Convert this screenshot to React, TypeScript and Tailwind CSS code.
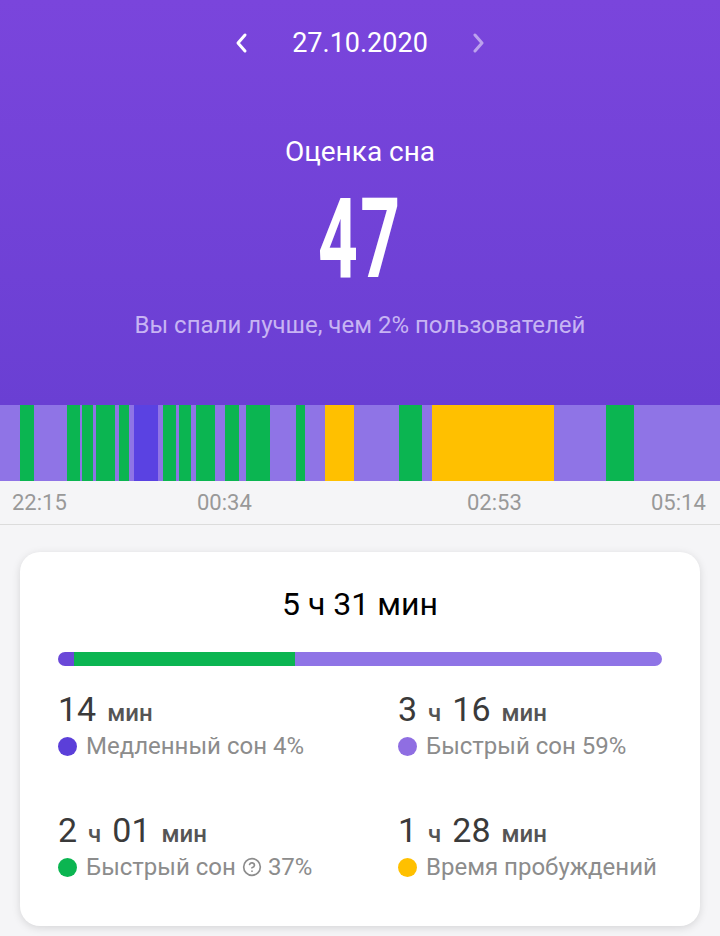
import React from "react";
import { CircleHelp } from "lucide-react";

const segs: [number, number, string][] = [
  [20, 34, "#0bb551"],
  [67, 80, "#0bb551"],
  [82, 93, "#0bb551"],
  [96, 115, "#0bb551"],
  [119, 129, "#0bb551"],
  [134, 158, "#5a42e2"],
  [163, 176, "#0bb551"],
  [179, 191, "#0bb551"],
  [196, 215, "#0bb551"],
  [225, 239, "#0bb551"],
  [246, 270, "#0bb551"],
  [296, 305, "#0bb551"],
  [325, 354, "#ffc000"],
  [399, 422, "#0bb551"],
  [432, 554, "#ffc000"],
  [606, 634, "#0bb551"],
];

function Stat({
  parts,
  dot,
  label,
}: {
  parts: [string, boolean][];
  dot: string;
  label: React.ReactNode;
}) {
  return (
    <div className="flex flex-col">
      <div className="h-[40px] leading-[40px] whitespace-nowrap">
        {parts.map(([t, big], i) =>
          big ? (
            <span key={i} className="text-[34px] text-[#3a3a3a]">
              {t}
            </span>
          ) : (
            <span key={i} className="text-[24px] text-[#555] font-medium mx-[11px]">
              {t}
            </span>
          )
        )}
      </div>
      <div className="mt-[3px] flex items-center h-[28px] text-[24px] leading-[28px] text-[#8c8c8c] whitespace-nowrap">
        <span className="w-[19px] h-[19px] rounded-full mr-[9px] shrink-0" style={{ background: dot }} />
        {label}
      </div>
    </div>
  );
}

export default function App() {
  return (
    <div className="w-[720px] h-[936px] overflow-hidden bg-[#f5f5f7] font-['Roboto',sans-serif]">
      <div className="h-[405px] bg-gradient-to-b from-[#7a45dc] to-[#6a3fd3] flex flex-col items-center">
        <div className="pt-[27px] flex items-center text-white">
          <svg width="14" height="22" viewBox="0 0 14 22" className="mr-[44px]">
            <polyline points="11,3 4,11 11,19" fill="none" stroke="white" strokeWidth="3" strokeLinecap="round" strokeLinejoin="round" />
          </svg>
          <span className="text-[27px] leading-[32px] text-white">27.10.2020</span>
          <svg width="14" height="22" viewBox="0 0 14 22" className="ml-[44px] opacity-50">
            <polyline points="3,3 10,11 3,19" fill="none" stroke="white" strokeWidth="3" strokeLinecap="round" strokeLinejoin="round" />
          </svg>
        </div>
        <div className="mt-[79px] text-[28px] leading-[28px] text-white">Оценка сна</div>
        <div className="mt-[17px] h-[112px] text-[112px] leading-[112px] font-bold text-white scale-x-[0.62] tracking-[4px]">47</div>
        <div className="mt-[17px] text-[24px] leading-[26px] text-[#c7b4f3]">
          Вы спали лучше, чем 2% пользователей
        </div>
      </div>
      <svg width="720" height="76" className="block">
        <rect x="0" y="0" width="720" height="76" fill="#8f74e6" />
        {segs.map(([a, b, c], i) => (
          <rect key={i} x={a} y={0} width={b - a} height={76} fill={c} />
        ))}
      </svg>
      <div className="relative h-[44px] border-b border-[#dcdcdc] text-[22px] leading-[44px] text-[#999]">
        <span className="absolute left-[12px] top-0">22:15</span>
        <span className="absolute left-[197px] top-0">00:34</span>
        <span className="absolute left-[467px] top-0">02:53</span>
        <span className="absolute left-[651px] top-0">05:14</span>
      </div>
      <div className="mt-[27px] mx-[20px] h-[374px] bg-white rounded-[20px] shadow-[0_2px_8px_rgba(0,0,0,0.13)] px-[38px] pt-[33px]">
        <div className="text-center text-[32px] leading-[38px] text-black">5 ч 31 мин</div>
        <div className="mt-[29px] h-[14px] rounded-full overflow-hidden flex">
          <div className="w-[16px] bg-[#6a48d8]" />
          <div className="w-[221px] bg-[#0bb551]" />
          <div className="flex-1 bg-[#8f74e6]" />
        </div>
        <div className="mt-[23px] grid grid-cols-[340px_1fr] gap-y-[50px]">
          <Stat parts={[["14", true], ["мин", false]]} dot="#5b3fd9" label="Медленный сон 4%" />
          <Stat parts={[["3", true], ["ч", false], ["16", true], ["мин", false]]} dot="#8f6ee2" label="Быстрый сон 59%" />
          <Stat
            parts={[["2", true], ["ч", false], ["01", true], ["мин", false]]}
            dot="#0bb551"
            label={
              <span className="flex items-center">
                Быстрый сон
                <CircleHelp size={20} strokeWidth={2} className="mx-[6px] text-[#8c8c8c]" />
                37%
              </span>
            }
          />
          <Stat parts={[["1", true], ["ч", false], ["28", true], ["мин", false]]} dot="#ffc000" label="Время пробуждений" />
        </div>
      </div>
    </div>
  );
}
